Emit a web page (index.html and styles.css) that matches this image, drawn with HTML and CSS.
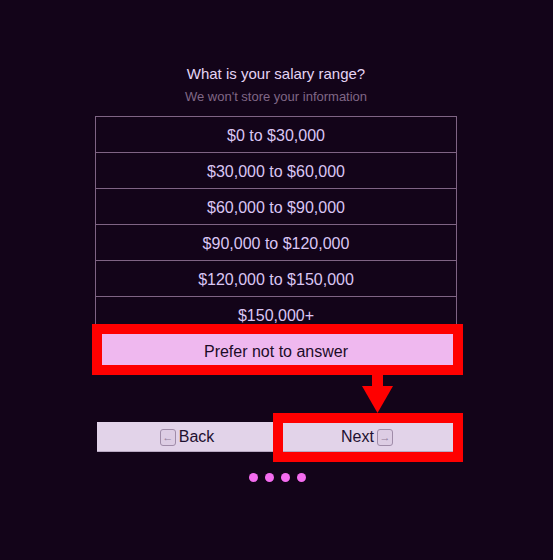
FILE: index.html
```html
<!DOCTYPE html>
<html lang="en">
<head>
  <meta charset="UTF-8">
  <title>Salary range</title>
  <link rel="stylesheet" href="styles.css">
</head>
<body>

  <div class="survey">
    <h1 class="question">What is your salary range?</h1>
    <p class="hint">We won't store your information</p>

    <ul class="options">
      <li class="option">$0 to $30,000</li>
      <li class="option">$30,000 to $60,000</li>
      <li class="option">$60,000 to $90,000</li>
      <li class="option">$90,000 to $120,000</li>
      <li class="option">$120,000 to $150,000</li>
      <li class="option">$150,000+</li>
      <li class="option selected">Prefer not to answer</li>
    </ul>

    <div class="nav">
      <button class="nav-btn"><span class="key">&larr;</span>Back</button>
      <button class="nav-btn">Next<span class="key">&rarr;</span></button>
    </div>

    <div class="dots">
      <span class="dot"></span>
      <span class="dot"></span>
      <span class="dot"></span>
      <span class="dot"></span>
    </div>

    <!-- annotations -->
    <div class="mark mark-answer"></div>
    <svg class="mark-arrow" width="32" height="38" viewBox="0 0 32 38">
      <rect x="10" y="0" width="11" height="12" fill="#ff0000"/>
      <polygon points="0,11 31,11 15.5,38" fill="#ff0000"/>
    </svg>
    <div class="mark mark-next"></div>
  </div>

</body>
</html>
```

FILE: styles.css
```css
html, body {
  margin: 0;
  padding: 0;
  height: 100%;
  background: #130419;
  font-family: 'Liberation Sans', Arial, sans-serif;
}

.survey {
  position: relative;
  width: 362px;
  margin-left: 95px;
  padding-top: 65px;
}

.question {
  margin: 0;
  font-size: 15px;
  line-height: 18px;
  font-weight: normal;
  text-align: center;
  color: #e4d4f4;
}

.hint {
  margin: 6px 0 0;
  font-size: 13px;
  line-height: 16px;
  text-align: center;
  color: #806786;
}

.options {
  list-style: none;
  margin: 11px 0 0;
  padding: 0;
  border-top: 1px solid #7f6484;
}

.option {
  height: 36px;
  box-sizing: border-box;
  display: flex;
  align-items: center;
  justify-content: center;
  padding-top: 2px;
  border: 1px solid #7f6484;
  border-top: none;
  font-size: 16px;
  color: #dac6f4;
}

.option.selected {
  background: #efb8ef;
  color: #1c0c28;
}

.nav {
  display: flex;
  margin: 53px 0 0 2px;
}

.nav-btn {
  flex: 1;
  height: 30px;
  display: flex;
  align-items: center;
  justify-content: center;
  gap: 3px;
  padding: 1px 0 0;
  border: none;
  border-bottom: 1px solid #b9a9c2;
  background: #e2d3e9;
  font-family: inherit;
  font-size: 16px;
  color: #1e1030;
}

.key {
  width: 14px;
  height: 15px;
  display: flex;
  align-items: center;
  justify-content: center;
  border: 1px solid #a08ca9;
  border-radius: 3px;
  background: #ddcde4;
  font-size: 11px;
  color: #8f7c99;
}

.dots {
  display: flex;
  justify-content: center;
  gap: 7px;
  margin-top: 21px;
  padding-left: 3px;
}

.dot {
  width: 9px;
  height: 9px;
  border-radius: 50%;
  background: #f46cef;
}

.mark {
  position: absolute;
  box-sizing: border-box;
  border: 10px solid #ff0000;
}

.mark-answer {
  left: -3px;
  top: 324px;
  width: 371px;
  height: 51px;
}

.mark-next {
  left: 178px;
  top: 413px;
  width: 190px;
  height: 49px;
}

.mark-arrow {
  position: absolute;
  left: 267px;
  top: 375px;
}
```
